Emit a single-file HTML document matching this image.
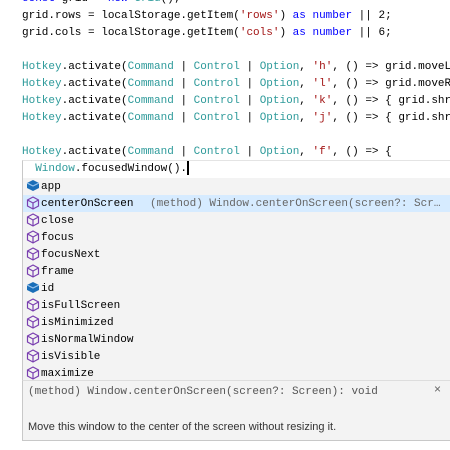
<!DOCTYPE html>
<html><head><style>
body{margin:0;width:450px;height:450px;overflow:hidden;background:#fff;position:relative;font-family:"Liberation Mono",monospace;font-size:11px;color:#000}
.l{position:absolute;left:22px;right:0;overflow:hidden;height:17px;line-height:17px;white-space:pre}
.t{color:#2d9a9a}.s{color:#a31515}.k{color:#0000ff}
#inp{position:absolute;left:22px;top:160px;width:428px;height:18px;border-left:1px solid #c8c8c8;border-top:1px solid #e4e4e4}
#dd{position:absolute;left:22px;top:178px;width:428px;height:203px;background:#f3f3f3;border-left:1px solid #c8c8c8}
.r{position:absolute;left:0;width:428px;height:17px;line-height:18px;white-space:pre;overflow:hidden}
.r svg{position:absolute;left:3px;top:1px}
.r span.n{position:absolute;left:18px}
.sel{background:#d6ebff}
#doc{position:absolute;left:22px;top:380px;width:428px;height:59px;background:#f3f3f3;border:1px solid #c8c8c8;border-right:none;border-top:1px solid #ddd}
</style></head><body>
<div class="l" style="top:-9px"><span class="k">const</span> grid = <span class="k">new</span> <span class="t">Grid</span>();</div>
<div class="l" style="top:8px">grid.rows = localStorage.getItem(<span class="s">'rows'</span>) <span class="k">as</span> <span class="k">number</span> || 2;</div>
<div class="l" style="top:25px">grid.cols = localStorage.getItem(<span class="s">'cols'</span>) <span class="k">as</span> <span class="k">number</span> || 6;</div>
<div class="l" style="top:59px"><span class="t">Hotkey</span>.activate(<span class="t">Command</span> | <span class="t">Control</span> | <span class="t">Option</span>, <span class="s">'h'</span>, () =&gt; grid.moveLeft</div>
<div class="l" style="top:76px"><span class="t">Hotkey</span>.activate(<span class="t">Command</span> | <span class="t">Control</span> | <span class="t">Option</span>, <span class="s">'l'</span>, () =&gt; grid.moveRight</div>
<div class="l" style="top:93px"><span class="t">Hotkey</span>.activate(<span class="t">Command</span> | <span class="t">Control</span> | <span class="t">Option</span>, <span class="s">'k'</span>, () =&gt; { grid.shrink</div>
<div class="l" style="top:110px"><span class="t">Hotkey</span>.activate(<span class="t">Command</span> | <span class="t">Control</span> | <span class="t">Option</span>, <span class="s">'j'</span>, () =&gt; { grid.shrink</div>
<div class="l" style="top:144px"><span class="t">Hotkey</span>.activate(<span class="t">Command</span> | <span class="t">Control</span> | <span class="t">Option</span>, <span class="s">'f'</span>, () =&gt; {</div>
<div id="inp"></div>
<div class="l" style="top:161px">  <span class="t">Window</span>.focusedWindow().<span style="display:inline-block;width:2px;height:14px;background:#000;vertical-align:middle"></span></div>
<div id="dd">
<div class="r" style="top:0"><svg width="14" height="13" viewBox="0 0 14 13"><path d="M7 1 L13 4 L13 9 L7 12 L1 9 L1 4 Z" fill="#1a6eb8"/><path d="M1 4 L7 7 L13 4" fill="none" stroke="#9cc6ee" stroke-width="1.2"/></svg><span class="n">app</span></div>
<div class="r sel" style="top:17px"><svg width="14" height="14" viewBox="0 0 14 14"><path d="M7 1 L12.5 4 L12.5 10 L7 13 L1.5 10 L1.5 4 Z M1.5 4 L7 7 L12.5 4 M7 7 L7 13" fill="none" stroke="#7a3fb0" stroke-width="1.2"/></svg><span class="n">centerOnScreen</span><span style="position:absolute;left:127px;color:#666">(method) Window.centerOnScreen(screen?: Scr…</span></div>
<div class="r" style="top:34px"><svg width="14" height="14" viewBox="0 0 14 14"><path d="M7 1 L12.5 4 L12.5 10 L7 13 L1.5 10 L1.5 4 Z M1.5 4 L7 7 L12.5 4 M7 7 L7 13" fill="none" stroke="#7a3fb0" stroke-width="1.2"/></svg><span class="n">close</span></div>
<div class="r" style="top:51px"><svg width="14" height="14" viewBox="0 0 14 14"><path d="M7 1 L12.5 4 L12.5 10 L7 13 L1.5 10 L1.5 4 Z M1.5 4 L7 7 L12.5 4 M7 7 L7 13" fill="none" stroke="#7a3fb0" stroke-width="1.2"/></svg><span class="n">focus</span></div>
<div class="r" style="top:68px"><svg width="14" height="14" viewBox="0 0 14 14"><path d="M7 1 L12.5 4 L12.5 10 L7 13 L1.5 10 L1.5 4 Z M1.5 4 L7 7 L12.5 4 M7 7 L7 13" fill="none" stroke="#7a3fb0" stroke-width="1.2"/></svg><span class="n">focusNext</span></div>
<div class="r" style="top:85px"><svg width="14" height="14" viewBox="0 0 14 14"><path d="M7 1 L12.5 4 L12.5 10 L7 13 L1.5 10 L1.5 4 Z M1.5 4 L7 7 L12.5 4 M7 7 L7 13" fill="none" stroke="#7a3fb0" stroke-width="1.2"/></svg><span class="n">frame</span></div>
<div class="r" style="top:102px"><svg width="14" height="13" viewBox="0 0 14 13"><path d="M7 1 L13 4 L13 9 L7 12 L1 9 L1 4 Z" fill="#1a6eb8"/><path d="M1 4 L7 7 L13 4" fill="none" stroke="#9cc6ee" stroke-width="1.2"/></svg><span class="n">id</span></div>
<div class="r" style="top:119px"><svg width="14" height="14" viewBox="0 0 14 14"><path d="M7 1 L12.5 4 L12.5 10 L7 13 L1.5 10 L1.5 4 Z M1.5 4 L7 7 L12.5 4 M7 7 L7 13" fill="none" stroke="#7a3fb0" stroke-width="1.2"/></svg><span class="n">isFullScreen</span></div>
<div class="r" style="top:136px"><svg width="14" height="14" viewBox="0 0 14 14"><path d="M7 1 L12.5 4 L12.5 10 L7 13 L1.5 10 L1.5 4 Z M1.5 4 L7 7 L12.5 4 M7 7 L7 13" fill="none" stroke="#7a3fb0" stroke-width="1.2"/></svg><span class="n">isMinimized</span></div>
<div class="r" style="top:153px"><svg width="14" height="14" viewBox="0 0 14 14"><path d="M7 1 L12.5 4 L12.5 10 L7 13 L1.5 10 L1.5 4 Z M1.5 4 L7 7 L12.5 4 M7 7 L7 13" fill="none" stroke="#7a3fb0" stroke-width="1.2"/></svg><span class="n">isNormalWindow</span></div>
<div class="r" style="top:170px"><svg width="14" height="14" viewBox="0 0 14 14"><path d="M7 1 L12.5 4 L12.5 10 L7 13 L1.5 10 L1.5 4 Z M1.5 4 L7 7 L12.5 4 M7 7 L7 13" fill="none" stroke="#7a3fb0" stroke-width="1.2"/></svg><span class="n">isVisible</span></div>
<div class="r" style="top:187px"><svg width="14" height="14" viewBox="0 0 14 14"><path d="M7 1 L12.5 4 L12.5 10 L7 13 L1.5 10 L1.5 4 Z M1.5 4 L7 7 L12.5 4 M7 7 L7 13" fill="none" stroke="#7a3fb0" stroke-width="1.2"/></svg><span class="n">maximize</span></div>
</div>
<div id="doc">
<div style="position:absolute;left:5px;top:5px;color:#555;white-space:pre">(method) Window.centerOnScreen(screen?: Screen): void</div>
<div style="position:absolute;right:10px;top:1px;color:#666;font-family:'Liberation Sans',sans-serif;font-size:12px">×</div>
<div style="position:absolute;left:5px;top:40px;font-family:'Liberation Sans',sans-serif;font-size:11px;color:#333">Move this window to the center of the screen without resizing it.</div>
</div>
</body></html>
